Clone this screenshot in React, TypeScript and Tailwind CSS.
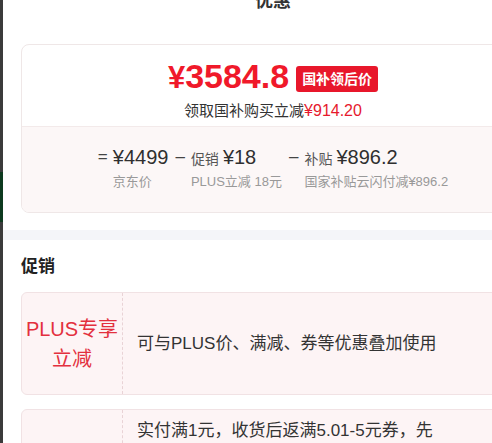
import React from 'react';

const font = { fontFamily: '"Liberation Sans", "Noto Sans CJK SC", sans-serif' };

const breakdown = [
  { op: '=', label: '京东价', value: '¥4499' },
  { op: '–', label: 'PLUS立减 18元', value: '¥18', prefix: '促销' },
  { op: '–', label: '国家补贴云闪付减¥896.2', value: '¥896.2', prefix: '补贴' },
];

const promos = [
  {
    tag: ['PLUS专享', '立减'],
    text: '可与PLUS价、满减、券等优惠叠加使用',
  },
  {
    tag: ['满返券'],
    text: '实付满1元，收货后返满5.01-5元券，先到先得，优惠券数量有限，领完即止，具体以实际到账为准，返券将在确认收货后发放至账户，请注意查收',
  },
];

const App: React.FC = () => {
  return (
    <div className="w-[492px] h-[443px] overflow-hidden flex items-start bg-white" style={font}>
      {/* page behind the sheet */}
      <div className="w-[3px] h-[443px] shrink-0 flex flex-col bg-[#3b3b3b]">
        <div className="h-[172px] shrink-0" />
        <div className="h-[50px] shrink-0 bg-[#0d3a1f]" />
      </div>

      <div className="w-[540px] shrink-0 flex flex-col">
        <div className="h-[24px] shrink-0 -mt-[11px] text-center text-[18px] leading-[24px] font-bold text-[#333]">优惠</div>

        {/* price card */}
        <div className="px-[18px] mt-[31px] shrink-0">
          <div className="rounded-[8px] border border-[#efe7e7] overflow-hidden">
            <div className="h-[82px] border-b border-[#f3eaea] pt-[14px] flex flex-col items-center">
              <div className="flex items-start h-[34px]">
                <span className="text-[34px] leading-none font-bold text-[#f0192a]">
                  <span className="text-[31px]">¥</span>3584.8
                </span>
                <span className="ml-[7px] mt-[7px] h-[26px] px-[6px] rounded-[3px] bg-[#e8172b] text-white text-[14px] font-bold leading-[26px]">国补领后价</span>
              </div>
              <div className="mt-[8px] text-[15px] leading-[20px] text-[#333] flex items-baseline">
                领取国补购买立减<span className="text-[16px] text-[#e6192d]">¥914.20</span>
              </div>
            </div>
            <div className="h-[85px] bg-[#fcf7f7] pt-[18px] flex justify-center items-start gap-[7px] text-[#333]">
              {breakdown.map((b, i) => (
                <div key={i} className="flex items-start">
                  <span className="text-[17px] leading-[24px] text-[#444]">{b.op}</span>
                  <div className={`flex flex-col ${i === 0 ? 'ml-[5px]' : 'ml-[6px]'}`}>
                    <div className="flex items-baseline h-[24px] leading-[24px]">
                      {b.prefix && <span className="text-[14px] text-[#555] mr-[4px]">{b.prefix}</span>}
                      <span className="text-[20px] text-[#2f2f2f]">{b.value}</span>
                    </div>
                    <span className="mt-[4px] text-[13px] leading-[18px] text-[#999] whitespace-nowrap">{b.label}</span>
                  </div>
                </div>
              ))}
            </div>
          </div>
        </div>

        <div className="mt-[17px] h-[10px] shrink-0 bg-[#f4f5f9]" />

        {/* promotions */}
        <div className="px-[18px] pt-[15px] shrink-0">
          <h3 className="text-[17px] leading-[24px] font-bold text-[#222]">促销</h3>
          <div className="mt-[13px] flex flex-col gap-[14px]">
            {promos.map((p, i) => (
              <div key={i} className={`flex rounded-[6px] border border-[#f1e2e4] bg-[#fdf4f5] ${i === 0 ? 'h-[103px]' : ''}`}>
                <div className="w-[101px] shrink-0 border-r border-dashed border-[#e9d3d6] flex flex-col items-center justify-center text-[20px] leading-[30px] text-[#e3303e]">
                  {p.tag.map(t => <span key={t}>{t}</span>)}
                </div>
                <div className={`flex-1 pl-[14px] flex items-center text-[17px] text-[#333] leading-[24px] ${i === 0 ? '' : 'py-[9px]'}`}>
                  <p className={i === 0 ? '' : 'w-[306px]'}>{p.text}</p>
                </div>
              </div>
            ))}
          </div>
        </div>
      </div>
    </div>
  );
};

export default App;
